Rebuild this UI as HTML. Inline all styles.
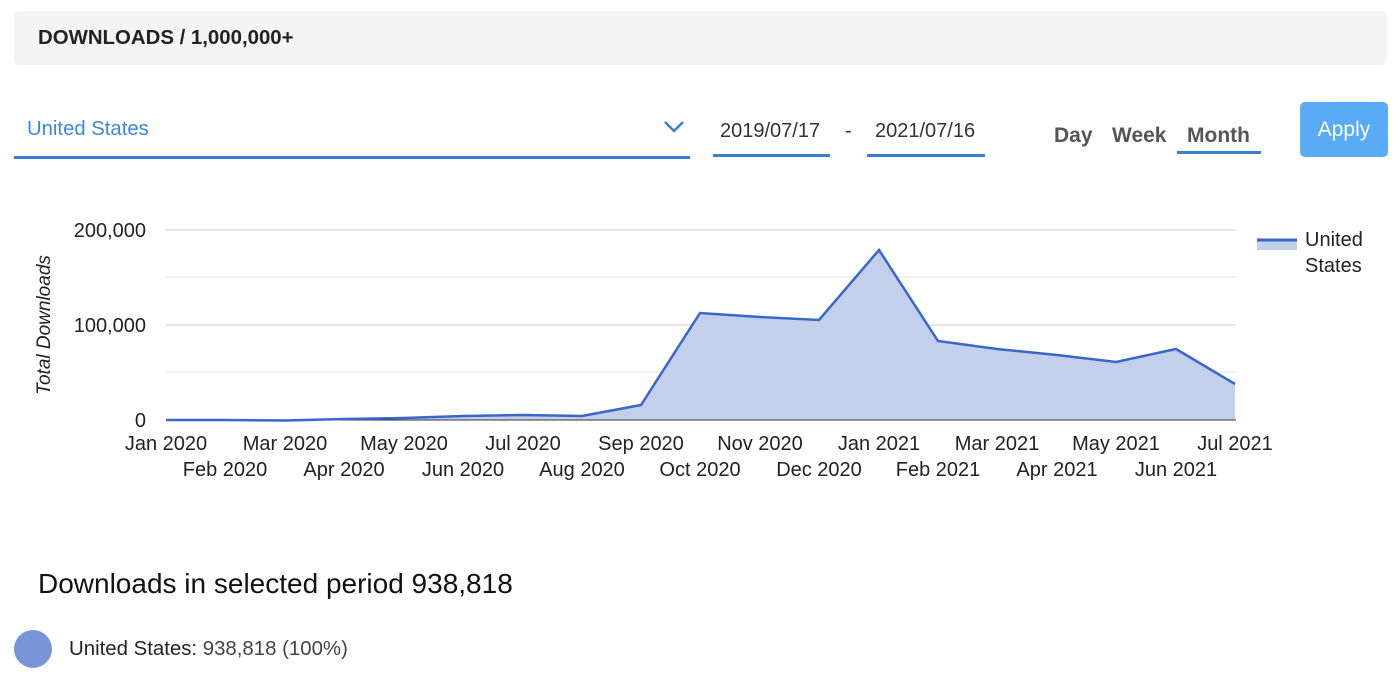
<!DOCTYPE html>
<html><head><style>
body{margin:0;width:1400px;height:677px;background:#fff;font-family:"Liberation Sans",Arial,sans-serif;position:relative;overflow:hidden}
.a{position:absolute}
</style></head><body>
<div class="a" style="left:14px;top:11px;width:1373px;height:54px;background:#f4f4f4;border-radius:5px"></div>
<div class="a" style="left:38px;top:27px;font-size:20.4px;font-weight:bold;color:#222">DOWNLOADS / 1,000,000+</div>
<div class="a" style="left:27px;top:118px;font-size:20.3px;color:#3b8ad8">United States</div>
<svg class="a" style="left:662px;top:119px" width="24" height="16"><path d="M3 3 L12 12 L21 3" fill="none" stroke="#3a7fcf" stroke-width="2.5"/></svg>
<div class="a" style="left:14px;top:156px;width:676px;height:3px;background:#3a7fcf"></div>
<div class="a" style="left:720px;top:120px;font-size:20px;color:#333">2019/07/17</div>
<div class="a" style="left:845px;top:120px;font-size:20px;color:#333">-</div>
<div class="a" style="left:875px;top:120px;font-size:20px;color:#333">2021/07/16</div>
<div class="a" style="left:713px;top:154px;width:117px;height:3px;background:#3a7fcf"></div>
<div class="a" style="left:867px;top:154px;width:118px;height:3px;background:#3a7fcf"></div>
<div class="a" style="left:1054px;top:124px;font-size:21px;font-weight:bold;color:#555">Day</div>
<div class="a" style="left:1112px;top:124px;font-size:21px;font-weight:bold;color:#555">Week</div>
<div class="a" style="left:1187px;top:124px;font-size:21px;font-weight:bold;color:#555">Month</div>
<div class="a" style="left:1177px;top:151px;width:84px;height:3px;background:#3a7fcf"></div>
<div class="a" style="left:1300px;top:102px;width:88px;height:55px;background:#5aabf5;border-radius:5px;color:#fff;font-size:21px;text-align:center;line-height:56px">Apply</div>
<svg class="a" style="left:0;top:200px" width="1400" height="300" font-family="Liberation Sans,Arial,sans-serif" font-size="20" fill="#222">
<g stroke="#ccc" stroke-width="1"><line x1="166" x2="1236" y1="30" y2="30"/><line x1="166" x2="1236" y1="77" y2="77" stroke="#e6e6e6"/><line x1="166" x2="1236" y1="125" y2="125"/><line x1="166" x2="1236" y1="172" y2="172" stroke="#e6e6e6"/></g>
<path d="M166 220 L225 220 L285 220.5 L344 219 L404 218 L463 216 L523 215 L582 216 L641 205 L700 113 L760 117 L819 120 L879 50 L938 141 L997 149 L1057 155 L1116 162 L1176 149 L1235 184 L1235 220 Z" fill="#c3d0ec"/>
<line x1="166" x2="1236" y1="220" y2="220" stroke="#333"/>
<path d="M166 220 L225 220 L285 220.5 L344 219 L404 218 L463 216 L523 215 L582 216 L641 205 L700 113 L760 117 L819 120 L879 50 L938 141 L997 149 L1057 155 L1116 162 L1176 149 L1235 184" fill="none" stroke="#3a66cc" stroke-width="2.5"/>
<g text-anchor="end"><text x="146" y="37">200,000</text><text x="146" y="132">100,000</text><text x="146" y="227">0</text></g>
<text transform="translate(50,125) rotate(-90)" text-anchor="middle" font-style="italic" font-size="19">Total Downloads</text>
<g text-anchor="middle">
<text x="166" y="250">Jan 2020</text><text x="285" y="250">Mar 2020</text><text x="404" y="250">May 2020</text><text x="523" y="250">Jul 2020</text><text x="641" y="250">Sep 2020</text><text x="760" y="250">Nov 2020</text><text x="879" y="250">Jan 2021</text><text x="997" y="250">Mar 2021</text><text x="1116" y="250">May 2021</text><text x="1235" y="250">Jul 2021</text>
<text x="225" y="276">Feb 2020</text><text x="344" y="276">Apr 2020</text><text x="463" y="276">Jun 2020</text><text x="582" y="276">Aug 2020</text><text x="700" y="276">Oct 2020</text><text x="819" y="276">Dec 2020</text><text x="938" y="276">Feb 2021</text><text x="1057" y="276">Apr 2021</text><text x="1176" y="276">Jun 2021</text>
</g>
<rect x="1257" y="40" width="40" height="10" fill="#c3d0ec"/><line x1="1257" x2="1297" y1="40" y2="40" stroke="#3a66cc" stroke-width="3"/>
<text x="1305" y="46">United</text><text x="1305" y="72">States</text>
</svg>
<div class="a" style="left:38px;top:568px;font-size:28px;color:#111">Downloads in selected period 938,818</div>
<div class="a" style="left:14px;top:630px;width:38px;height:38px;border-radius:50%;background:#7895da"></div>
<div class="a" style="left:69px;top:638px;font-size:20.4px;color:#222">United States: <span style="color:#444">938,818 (100%)</span></div>
</body></html>
